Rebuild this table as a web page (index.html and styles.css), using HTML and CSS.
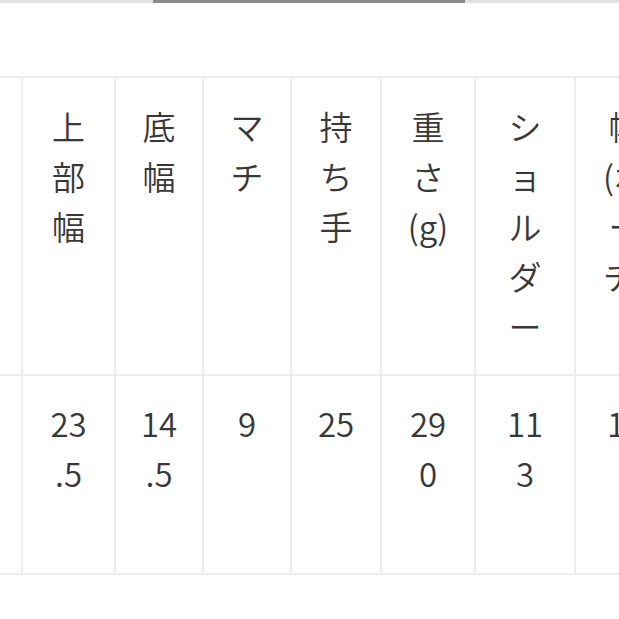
FILE: index.html
```html
<!DOCTYPE html>
<html lang="ja">
<head>
<meta charset="utf-8">
<link rel="stylesheet" href="styles.css">
</head>
<body>
<div class="topbar"><div class="topbar-active"></div></div>
<div class="scroller">
<table class="spec">
<colgroup>
<col class="c0"><col class="c1"><col class="c2"><col class="c3"><col class="c4"><col class="c5"><col class="c6"><col class="c7">
</colgroup>
<tr class="head">
<th><div class="cell"></div></th>
<th><div class="cell">上<br>部<br>幅</div></th>
<th><div class="cell">底<br>幅</div></th>
<th><div class="cell">マ<br>チ</div></th>
<th><div class="cell">持<br>ち<br>手</div></th>
<th><div class="cell">重<br>さ<br>(g)</div></th>
<th><div class="cell">シ<br>ョ<br>ル<br>ダ<br>ー</div></th>
<th><div class="cell">幅<br>(ポ<br>ー<br>チ)</div></th>
</tr>
<tr class="body">
<td><div class="cell"></div></td>
<td><div class="cell">23<br>.5</div></td>
<td><div class="cell">14<br>.5</div></td>
<td><div class="cell">9</div></td>
<td><div class="cell">25</div></td>
<td><div class="cell">29<br>0</div></td>
<td><div class="cell">11<br>3</div></td>
<td><div class="cell">16</div></td>
</tr>
</table>
</div>
</body>
</html>
```
FILE: styles.css
```css
html, body {
  margin: 0;
  padding: 0;
  background: #ffffff;
}
body {
  width: 619px;
  height: 619px;
  overflow: hidden;
  font-family: "Noto Sans CJK JP", "Noto Sans", sans-serif;
  color: #383838;
}
.topbar {
  height: 3px;
  background: #e2e2e2;
  display: flex;
}
.topbar-active {
  margin-left: 153px;
  width: 312px;
  height: 3px;
  background: #8a8a8a;
}
.scroller {
  margin-top: 73px;
  overflow: hidden;
}
.spec {
  border-collapse: collapse;
  table-layout: fixed;
  margin-left: -69px;
  width: 743px;
}
.c0 { width: 90px; }
.c1 { width: 93px; }
.c2 { width: 88px; }
.c3 { width: 88px; }
.c4 { width: 90px; }
.c5 { width: 94px; }
.c6 { width: 100px; }
.c7 { width: 100px; }
.spec th, .spec td {
  border: 2px solid #ececec;
  padding: 0;
  vertical-align: top;
  text-align: center;
  font-weight: 350;
}
.head th { height: 296px; }
.body td { height: 197px; }
.cell {
  font-size: 33px;
  line-height: 50px;
  white-space: nowrap;
}
.head .cell { padding-top: 23px; }
.body .cell { padding-top: 22px; }
```
